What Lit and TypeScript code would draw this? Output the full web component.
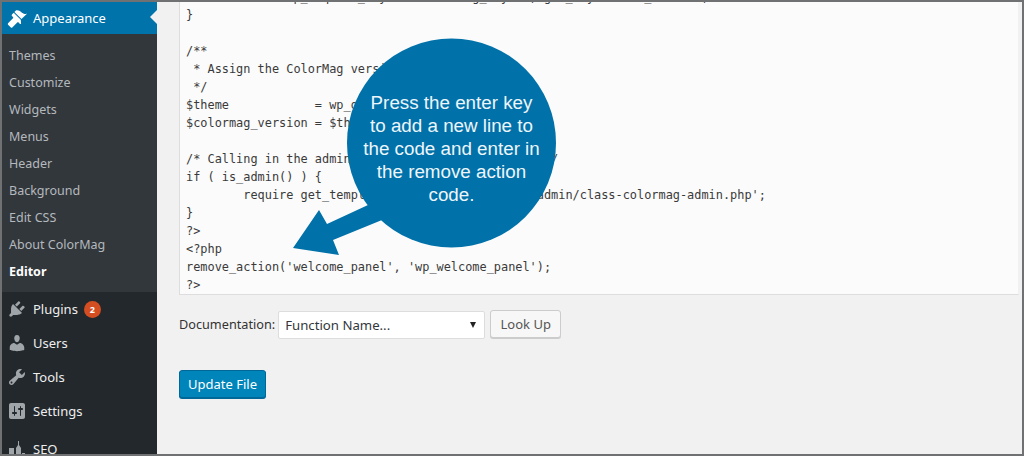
import { LitElement, html, css, svg } from "lit";
import { customElement } from "lit/decorators.js";

const CODE = `              wp_enqueue_style( 'colormag_style', get_stylesheet_uri() );
}

/**
 * Assign the ColorMag version to a variable.
 */
$theme            = wp_get_theme( 'colormag' );
$colormag_version = $theme['Version'];

/* Calling in the admin area for the Welcome Page */
if ( is_admin() ) {
        require get_template_directory() . '/inc/admin/class-colormag-admin.php';
}
?>
<?php
remove_action('welcome_panel', 'wp_welcome_panel');
?>`;

const SUB = ["Themes", "Customize", "Widgets", "Menus", "Header", "Background", "Edit CSS", "About ColorMag"];

const ICONS: Record<string, unknown> = {
  brush: svg`<path d="M14.480 11.060L7.410 3.990l1.500-1.500c.5-.56 2.300-.47 3.510.32 1.210.8 1.430 1.280 2.910 2.100 1.180.64 2.450 1.260 4.670.86l-5.520 5.290zm-.71.71L6.700 4.700 4.930 6.470c-.39.39-.39 1.020 0 1.410l1.060 1.060c.39.39.39 1.020 0 1.410l-4.950 4.950c-.39.39-.39 1.020 0 1.410l2.830 2.830c.39.39 1.020.39 1.410 0l4.950-4.950c.39-.39 1.020-.39 1.410 0l1.060 1.060c.39.39 1.020.39 1.410 0z" />`,
  plug: svg`<path d="M13.110 4.360L9.870 7.600 8 5.730l3.240-3.240c.35-.34 1.050-.2 1.560.32.52.51.66 1.210.31 1.550zm-8 1.770l.91-1.120 9.010 9.010-1.190.84c-.71.71-2.630 1.160-3.820 1.160H6.140L4.900 17.260c-.59.59-1.540.59-2.120 0-.59-.58-.59-1.530 0-2.120l1.240-1.240v-3.880c0-1.130.4-3.190 1.090-3.890zm7.260 3.970l3.240-3.240c.34-.35 1.040-.21 1.550.31.52.51.66 1.210.31 1.550l-3.240 3.250z" />`,
  user: svg`<path d="M10 9.250c-2.270 0-2.730-3.440-2.730-3.440C7 4.020 7.820 2 9.970 2c2.160 0 2.980 2.020 2.710 3.810 0 0-.41 3.440-2.680 3.440zm0 2.570L12.720 10c2.390 0 4.520 2.330 4.520 4.530v2.490s-3.650 1.130-7.240 1.130c-3.650 0-7.240-1.130-7.240-1.130v-2.490c0-2.250 1.940-4.480 4.470-4.480z" />`,
  wrench: svg`<path d="M16.680 9.770c-1.340 1.340-3.300 1.670-4.950.99l-5.410 6.520c-.99.99-2.590.99-3.580 0s-.99-2.590 0-3.570l6.520-5.420c-.68-1.650-.35-3.610.99-4.950 1.280-1.280 3.120-1.620 4.720-1.060l-2.890 2.890 2.820 2.820 2.860-2.870c.53 1.580.18 3.390-1.080 4.650zM3.810 16.210c.4.39 1.040.39 1.430 0 .4-.4.4-1.040 0-1.430-.39-.4-1.030-.4-1.430 0-.39.39-.39 1.030 0 1.430z" />`,
  sliders: svg`<path d="M18 16V4c0-1.100-.9-2-2-2H4c-1.100 0-2 .9-2 2v12c0 1.100.9 2 2 2h12c1.100 0 2-.9 2-2zM8 11h1c.55 0 1 .45 1 1s-.45 1-1 1H8v1.500c0 .28-.22.5-.5.5s-.5-.22-.5-.5V13H6c-.55 0-1-.45-1-1s.45-1 1-1h1V5.500c0-.28.22-.5.5-.5s.5.22.5.5V11zm5-2h-1c-.55 0-1-.45-1-1s.45-1 1-1h1V5.500c0-.28.22-.5.5-.5s.5.22.5.5V7h1c.55 0 1 .45 1 1s-.45 1-1 1h-1v5.500c0 .28-.22.5-.5.5s-.5-.22-.5-.5V9z" />`,
  seo: svg`<path d="M2 9h5v9H2z M9 18V9l2-3V2h1v4l2 3v9z M15 18v-4h3v4z" />`,
};

@customElement("app-root")
export class AppRoot extends LitElement {
  static styles = css`
    :host { display: block; width: 1024px; height: 456px; overflow: hidden; }
    .frame {
      position: relative; box-sizing: border-box; width: 1024px; height: 456px;
      border: 2px solid #6f7173; display: flex; overflow: hidden;
      background: #f1f1f1; font-family: "Noto Sans", "Open Sans", sans-serif;
    }
    .side { width: 155px; flex: none; background: #23282d; display: flex; flex-direction: column; }
    .current {
      height: 32px; flex: none; background: #0073aa; color: #fff; display: flex; align-items: center; gap: 6px;
      padding-left: 5px; font-size: 13px; position: relative;
    }
    .current svg { fill: #fff; }
    .current::after {
      content: ""; position: absolute; right: 0; top: 8px; border: 7px solid transparent;
      border-right-color: #f1f1f1; border-left-width: 0;
    }
    .sub { background: #32373c; height: 258px; flex: none; padding-top: 8px; box-sizing: border-box; display: flex; flex-direction: column; }
    .sub div { height: 27px; line-height: 27px; padding-left: 7px; color: #b4b9be; font-size: 12.500px; flex: none; }
    .sub .on { color: #fff; font-weight: 700; }
    .items { display: flex; flex-direction: column; flex: none; }
    .item { height: 34px; display: flex; align-items: center; gap: 6px; padding-left: 5px; color: #eee; font-size: 13px; flex: none; }
    .item svg { fill: #a0a5aa; flex: none; }
    .item.seo { margin-top: 4px; }
    .badge {
      width: 17px; height: 17px; border-radius: 50%; background: #d54e21; color: #fff; font-size: 9px;
      font-weight: 700; display: flex; align-items: center; justify-content: center;
    }
    .main { flex: 1; min-width: 0; padding-left: 22px; display: flex; flex-direction: column; }
    .code {
      height: 293px; flex: none; box-sizing: border-box; background: #fbfbfb; border: 1px solid #ddd; border-top: 0;
      border-right-color: #f1f1f1; margin-right: 3px; padding-left: 6px; overflow: hidden;
    }
    pre {
      margin: -14px 0 0; font-family: "DejaVu Sans Mono", monospace; font-size: 11.900px; line-height: 18px; color: #3a3a3a;
    }
    .doc { display: flex; align-items: center; margin-top: 14px; height: 30px; font-size: 12.700px; color: #333; }
    .sel {
      width: 207px; height: 28px; margin: 2px 0 0 3px; box-sizing: border-box; background: #fff; border: 1px solid #ddd;
      border-radius: 2px; display: flex; align-items: center; justify-content: space-between; padding: 0 8px 0 6px; color: #32373c;
      font-size: 13.200px;
    }
    .sel i { width: 0; height: 0; border: 3.500px solid transparent; border-top: 6px solid #222; border-bottom: 0; }
    .look {
      margin-left: 5px; width: 71px; height: 28px; box-sizing: border-box; border: 1px solid #ccc; border-radius: 3px;
      background: #f7f7f7; box-shadow: 0 1px 0 #ccc; display: flex; align-items: center; justify-content: center; color: #555;
      font-size: 13px;
    }
    .update {
      margin-top: 31px; width: 87px; height: 28px; box-sizing: border-box; background: #0085ba; border: 1px solid #006799;
      border-radius: 3px; color: #fff; font-size: 13px; display: flex; align-items: center; justify-content: center;
      box-shadow: 0 1px 0 #006799;
    }
    .overlay { position: absolute; left: -2px; top: -2px; pointer-events: none; }
    .bubble {
      position: absolute; left: 345px; top: 37px; width: 209px; height: 209px; border-radius: 50%;
      box-sizing: border-box; padding-top: 10px;
      display: flex; align-items: center; justify-content: center; text-align: center; color: #eef6fb;
      font-family: "Liberation Sans", Arial, sans-serif; font-size: 18.800px; line-height: 23px;
    }
  `;

  private icon(name: string) {
    return html`<svg width="20" height="20" viewBox="0 0 20 20">${ICONS[name]}</svg>`;
  }

  render() {
    return html`<div class="frame">
      <nav class="side">
        <div class="current">${this.icon("brush")}<span>Appearance</span></div>
        <div class="sub">
          ${SUB.map((s) => html`<div>${s}</div>`)}
          <div class="on">Editor</div>
        </div>
        <div class="items">
          <div class="item">${this.icon("plug")}<span>Plugins</span><span class="badge">2</span></div>
          <div class="item">${this.icon("user")}<span>Users</span></div>
          <div class="item">${this.icon("wrench")}<span>Tools</span></div>
          <div class="item">${this.icon("sliders")}<span>Settings</span></div>
          <div class="item seo">${this.icon("seo")}<span>SEO</span></div>
        </div>
      </nav>
      <main class="main">
        <div class="code"><pre>${CODE}</pre></div>
        <div class="doc">
          <span>Documentation:</span>
          <div class="sel"><span>Function Name...</span><i></i></div>
          <div class="look">Look Up</div>
        </div>
        <div class="update">Update File</div>
      </main>
      <svg class="overlay" width="1024" height="456" viewBox="0 0 1024 456">
        <polygon fill="#0071a9" points="293,248 319,210 327,224 368,205 382,220 333,240 339,255" />
        <circle fill="#0071a9" cx="451.500" cy="143" r="104.500" />
      </svg>
      <div class="bubble"><div>Press the enter key<br />to add a new line to<br />the code and enter in<br />the remove action<br />code.</div></div>
    </div>`;
  }
}
